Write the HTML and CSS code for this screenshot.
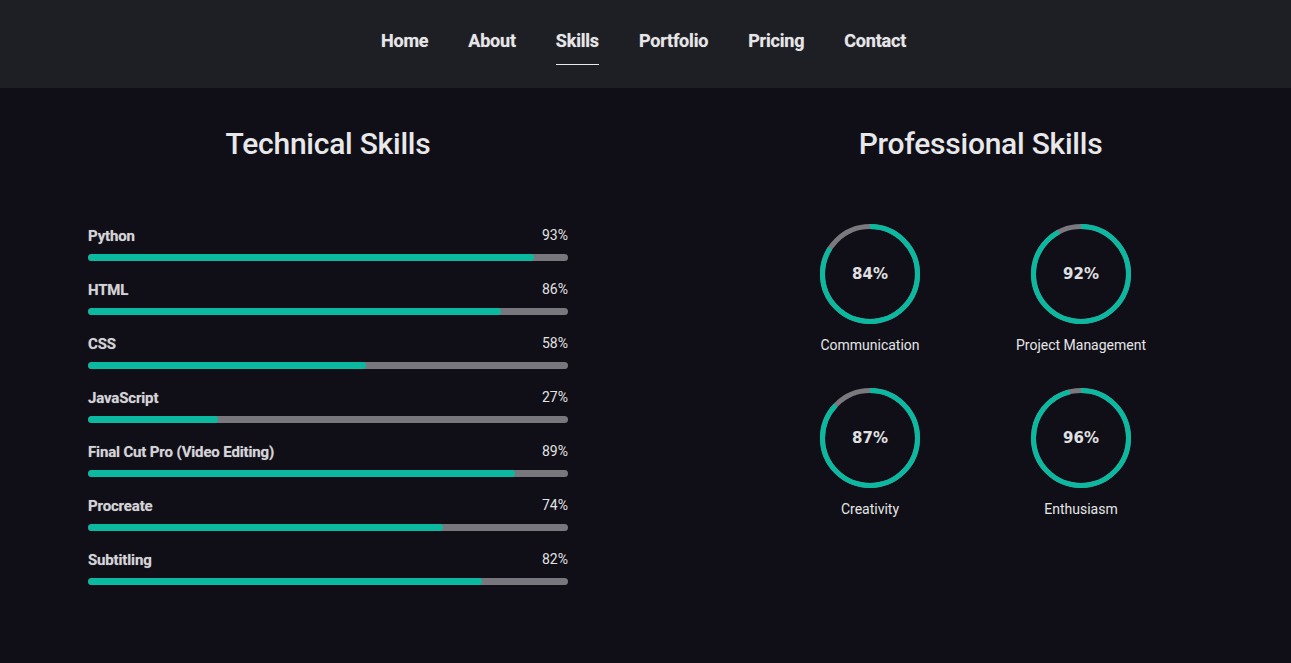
FILE: index.html
```html
<!DOCTYPE html>
<html lang="en">
<head>
<meta charset="utf-8">
<title>Skills</title>
<link rel="stylesheet" href="styles.css">
</head>
<body>
<header class="nav">
  <a class="nav-link" href="#">Home</a>
  <a class="nav-link" href="#">About</a>
  <a class="nav-link active" href="#">Skills</a>
  <a class="nav-link" href="#">Portfolio</a>
  <a class="nav-link" href="#">Pricing</a>
  <a class="nav-link" href="#">Contact</a>
</header>
<main class="skills">
  <section class="col tech">
    <h2 class="title">Technical Skills</h2>
    <div class="bars">
      <div class="bar-row"><div class="bar-head"><span class="bar-name">Python</span><span class="bar-pct">93%</span></div><div class="track"><div class="fill" style="width:93%"></div></div></div>
      <div class="bar-row"><div class="bar-head"><span class="bar-name">HTML</span><span class="bar-pct">86%</span></div><div class="track"><div class="fill" style="width:86%"></div></div></div>
      <div class="bar-row"><div class="bar-head"><span class="bar-name">CSS</span><span class="bar-pct">58%</span></div><div class="track"><div class="fill" style="width:58%"></div></div></div>
      <div class="bar-row"><div class="bar-head"><span class="bar-name">JavaScript</span><span class="bar-pct">27%</span></div><div class="track"><div class="fill" style="width:27%"></div></div></div>
      <div class="bar-row"><div class="bar-head"><span class="bar-name">Final Cut Pro (Video Editing)</span><span class="bar-pct">89%</span></div><div class="track"><div class="fill" style="width:89%"></div></div></div>
      <div class="bar-row"><div class="bar-head"><span class="bar-name">Procreate</span><span class="bar-pct">74%</span></div><div class="track"><div class="fill" style="width:74%"></div></div></div>
      <div class="bar-row"><div class="bar-head"><span class="bar-name">Subtitling</span><span class="bar-pct">82%</span></div><div class="track"><div class="fill" style="width:82%"></div></div></div>
    </div>
  </section>
  <section class="col pro">
    <h2 class="title pro-title">Professional Skills</h2>
    <div class="rings">
      <div class="ring-item">
        <div class="ring">
          <svg width="100" height="100" viewBox="0 0 100 100"><circle class="ring-bg" cx="50" cy="50" r="47.5"/><circle class="ring-fg" cx="50" cy="50" r="47.5" style="stroke-dasharray:250.7 298.5"/></svg>
          <span class="ring-pct">84%</span>
        </div>
        <div class="ring-label">Communication</div>
      </div>
      <div class="ring-item">
        <div class="ring">
          <svg width="100" height="100" viewBox="0 0 100 100"><circle class="ring-bg" cx="50" cy="50" r="47.5"/><circle class="ring-fg" cx="50" cy="50" r="47.5" style="stroke-dasharray:274.6 298.5"/></svg>
          <span class="ring-pct">92%</span>
        </div>
        <div class="ring-label">Project Management</div>
      </div>
      <div class="ring-item">
        <div class="ring">
          <svg width="100" height="100" viewBox="0 0 100 100"><circle class="ring-bg" cx="50" cy="50" r="47.5"/><circle class="ring-fg" cx="50" cy="50" r="47.5" style="stroke-dasharray:259.7 298.5"/></svg>
          <span class="ring-pct">87%</span>
        </div>
        <div class="ring-label">Creativity</div>
      </div>
      <div class="ring-item">
        <div class="ring">
          <svg width="100" height="100" viewBox="0 0 100 100"><circle class="ring-bg" cx="50" cy="50" r="47.5"/><circle class="ring-fg" cx="50" cy="50" r="47.5" style="stroke-dasharray:286.6 298.5"/></svg>
          <span class="ring-pct">96%</span>
        </div>
        <div class="ring-label">Enthusiasm</div>
      </div>
    </div>
  </section>
</main>
</body>
</html>
```
FILE: styles.css
```css
* { box-sizing: border-box; }
html, body { margin: 0; padding: 0; }
body {
  background: #100f17;
  color: #e6e6e6;
  font-family: Roboto, "Liberation Sans", sans-serif;
  min-height: 663px;
}
.nav {
  height: 88px;
  background: #1e1f24;
  display: flex;
  justify-content: center;
  align-items: center;
  gap: 40px;
  padding-right: 4px;
  padding-bottom: 6px;
}
.nav-link {
  position: relative;
  color: #e6e6e8;
  text-decoration: none;
  font-size: 18px;
  font-weight: 700;
  letter-spacing: -0.2px;
  line-height: 24px;
  text-shadow: 0 0 1px rgba(230, 230, 232, 0.5);
}
.nav-link.active::after {
  content: "";
  position: absolute;
  left: 0;
  right: 0;
  bottom: -12px;
  height: 1px;
  background: #e8e8ea;
}
.skills {
  display: grid;
  grid-template-columns: 656px 1fr;
  padding-top: 38px;
}
.col { display: flex; flex-direction: column; align-items: center; }
.title {
  margin: 0;
  font-size: 30px;
  font-weight: 500;
  line-height: 36px;
  letter-spacing: -0.25px;
  color: #e8e8ea;
}
.pro-title { padding-left: 14px; }
.bars {
  width: 480px;
  margin-top: 63px;
  display: flex;
  flex-direction: column;
  gap: 18px;
}
.bar-head {
  display: flex;
  justify-content: space-between;
  align-items: flex-end;
  height: 20px;
  margin-bottom: 9px;
}
.bar-name {
  font-size: 15px;
  font-weight: 700;
  letter-spacing: -0.15px;
  color: #d4d4d7;
  text-shadow: 0 0 1px rgba(212, 212, 215, 0.5);
}
.bar-pct {
  font-size: 14px;
  color: #e2e2e4;
  line-height: 20px;
}
.track {
  height: 7px;
  border-radius: 4px;
  background: #78777d;
  overflow: hidden;
}
.fill {
  height: 100%;
  background: #0bb9a0;
  border-radius: 4px;
}
.rings {
  margin-top: 62px;
  display: grid;
  grid-template-columns: repeat(2, 211px);
  row-gap: 35px;
  margin-left: 4px;
}
.ring-item { display: flex; flex-direction: column; align-items: center; }
.ring {
  position: relative;
  width: 100px;
  height: 100px;
}
.ring svg { display: block; transform: rotate(-90deg); }
.ring-bg { fill: none; stroke: #7a797f; stroke-width: 5; }
.ring-fg { fill: none; stroke: #0bb9a0; stroke-width: 5; }
.ring-pct {
  position: absolute;
  inset: 0;
  display: flex;
  align-items: center;
  justify-content: center;
  font-family: "DejaVu Sans", "Noto Sans", sans-serif;
  font-weight: 700;
  font-size: 15px;
  color: #e0e0e3;
}
.ring-label {
  margin-top: 13px;
  font-size: 14px;
  line-height: 16px;
  color: #e6e6e8;
}
```
